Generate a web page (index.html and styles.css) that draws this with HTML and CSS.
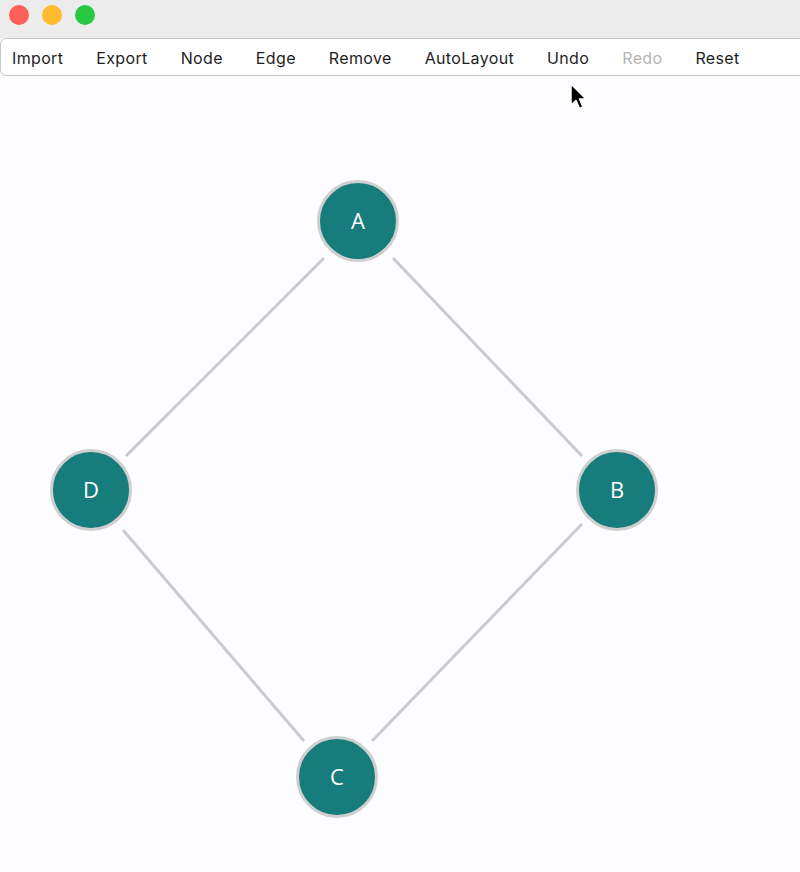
FILE: index.html
```html
<!DOCTYPE html>
<html>
<head>
<meta charset="utf-8">
<link rel="stylesheet" href="styles.css">
</head>
<body>
<div class="window">
  <div class="titlebar">
    <span class="light red"></span>
    <span class="light yellow"></span>
    <span class="light green"></span>
  </div>
  <div class="toolbar">
    <span class="item">Import</span>
    <span class="item">Export</span>
    <span class="item">Node</span>
    <span class="item">Edge</span>
    <span class="item">Remove</span>
    <span class="item">AutoLayout</span>
    <span class="item">Undo</span>
    <span class="item disabled">Redo</span>
    <span class="item">Reset</span>
  </div>
  <div class="canvas">
    <svg class="graph" width="800" height="796" viewBox="0 0 800 796">
      <g class="edges">
        <line x1="324" y1="182" x2="126" y2="380"/>
        <line x1="393" y1="182" x2="582" y2="380"/>
        <line x1="123" y1="454" x2="304" y2="665"/>
        <line x1="582" y1="448" x2="372" y2="665"/>
      </g>
      <g class="nodes">
        <circle cx="358" cy="145" r="39.5"/>
        <circle cx="617" cy="414" r="39.5"/>
        <circle cx="91" cy="414" r="39.5"/>
        <circle cx="337" cy="701" r="39.5"/>
      </g>
      <g class="labels">
        <text x="358" y="153">A</text>
        <text x="617" y="422">B</text>
        <text x="91" y="422">D</text>
        <text x="337" y="709">C</text>
      </g>
      <path class="cursor" d="M571 8 L571 29 L576 24.5 L579.5 32.5 L583 31 L579.5 23 L586 23 Z"/>
    </svg>
  </div>
</div>
</body>
</html>
```
FILE: styles.css
```css
html, body {
  margin: 0;
  padding: 0;
  background: #fdfcfe;
  overflow: hidden;
}
.window {
  width: 800px;
  height: 872px;
  display: flex;
  flex-direction: column;
  font-family: Inter, "Liberation Sans", sans-serif;
}
.titlebar {
  height: 38px;
  background: #ececec;
  display: flex;
  align-items: center;
  gap: 13px;
  padding-left: 9px;
  padding-bottom: 8px;
  box-sizing: border-box;
}
.light {
  width: 20px;
  height: 20px;
  border-radius: 50%;
  display: inline-block;
}
.red { background: #fe5f57; }
.yellow { background: #febb2e; }
.green { background: #28c840; }
.toolbar {
  height: 38px;
  width: 820px;
  box-sizing: border-box;
  background: #ffffff;
  border: 1px solid #c6c6c6;
  border-radius: 6px;
  display: flex;
  align-items: center;
  gap: 33px;
  padding-left: 11px;
  padding-top: 2px;
}
.item {
  font-size: 16px;
  color: #1e1e1e;
  letter-spacing: 0.35px;
}
.item.disabled {
  color: #b4b4b4;
}
.canvas {
  flex: 1;
  background: #fdfcfe;
}
.graph {
  display: block;
}
.edges line {
  stroke: #cbcbcd;
  stroke-width: 3;
}
.nodes circle {
  fill: #167c7c;
  stroke: #cfcfcf;
  stroke-width: 3;
}
.labels text {
  fill: #ffffff;
  font-family: "Open Sans", sans-serif;
  font-size: 22px;
  text-anchor: middle;
}
.cursor {
  fill: #000000;
  stroke: #ffffff;
  stroke-width: 1.5;
  stroke-linejoin: round;
}
```
